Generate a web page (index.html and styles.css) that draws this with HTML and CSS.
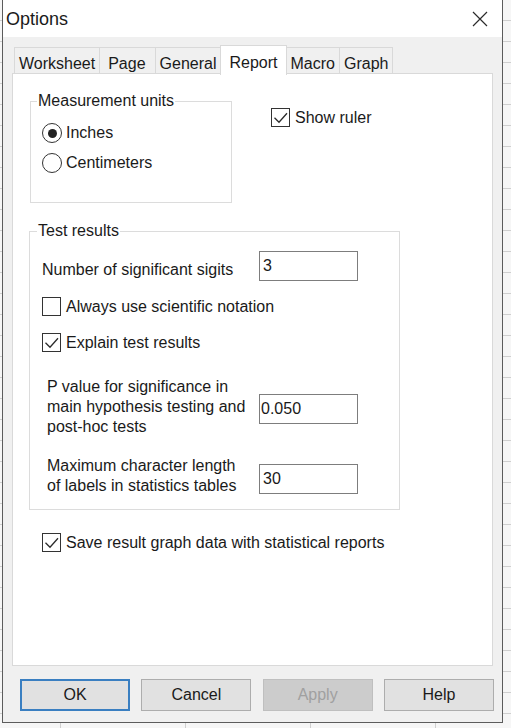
FILE: index.html
```html
<!DOCTYPE html>
<html lang="en">
<head>
<meta charset="utf-8">
<title>Options</title>
<link rel="stylesheet" href="styles.css">
</head>
<body>
<div class="dialog">
  <div class="titlebar">
    <span class="title">Options</span>
    <svg class="close" width="16" height="16" viewBox="0 0 16 16" aria-label="Close"><path d="M1 1 L15 15 M15 1 L1 15" stroke="#2b2b2b" stroke-width="1.2" fill="none"/></svg>
  </div>
  <div class="tabs">
    <div class="tab">Worksheet</div>
    <div class="tab tab-wide">Page</div>
    <div class="tab">General</div>
    <div class="tab active">Report</div>
    <div class="tab">Macro</div>
    <div class="tab last">Graph</div>
  </div>
  <div class="panel">
    <div class="top-row">
      <fieldset class="group units">
        <legend>Measurement units</legend>
        <div class="radio-row"><span class="radio checked"></span>Inches</div>
        <div class="radio-row"><span class="radio"></span>Centimeters</div>
      </fieldset>
      <div class="check-row ruler">
        <span class="checkbox"><svg width="19" height="19" viewBox="0 0 19 19"><path d="M3.5 9.8 L8 14.3 L16 5.2" stroke="#2b2b2b" stroke-width="1.3" fill="none"/></svg></span>Show ruler
      </div>
    </div>

    <fieldset class="group results">
      <legend>Test results</legend>
      <div class="field-row digits">
        <span class="field-label">Number of significant sigits</span>
        <input class="field-input" type="text" value="3" readonly>
      </div>
      <div class="check-row always">
        <span class="checkbox"></span>Always use scientific notation
      </div>
      <div class="check-row explain">
        <span class="checkbox"><svg width="19" height="19" viewBox="0 0 19 19"><path d="M3.5 9.8 L8 14.3 L16 5.2" stroke="#2b2b2b" stroke-width="1.3" fill="none"/></svg></span>Explain test results
      </div>
      <div class="field-row multi pvalue">
        <span class="field-label">P value for significance in<br>main hypothesis testing and<br>post-hoc tests</span>
        <input class="field-input" type="text" value="0.050" readonly>
      </div>
      <div class="field-row multi maxlen">
        <span class="field-label">Maximum character length<br>of labels in statistics tables</span>
        <input class="field-input" type="text" value="30" readonly>
      </div>
    </fieldset>

    <div class="check-row save">
      <span class="checkbox"><svg width="19" height="19" viewBox="0 0 19 19"><path d="M3.5 9.8 L8 14.3 L16 5.2" stroke="#2b2b2b" stroke-width="1.3" fill="none"/></svg></span>Save result graph data with statistical reports
    </div>
  </div>
  <div class="buttons">
    <button class="btn default">OK</button>
    <button class="btn">Cancel</button>
    <button class="btn disabled">Apply</button>
    <button class="btn">Help</button>
  </div>
</div>
</body>
</html>
```

FILE: styles.css
```css
* { box-sizing: border-box; }

html, body {
  margin: 0;
  padding: 0;
}

body {
  width: 511px;
  height: 728px;
  overflow: hidden;
  font-family: "Liberation Sans", Arial, sans-serif;
  font-size: 16px;
  color: #1a1a1a;
  background-color: #f6f6f6;
  background-image:
    repeating-linear-gradient(to bottom, transparent 0 20px, #cfcfcf 20px 21px),
    repeating-linear-gradient(to right, transparent 0 60px, #cfcfcf 60px 61px, transparent 61px 125px);
}

.dialog {
  margin-left: 2px;
  width: 501px;
  height: 723px;
  background: #f0f0f0;
  border-left: 1px solid #5c5c5c;
  border-right: 1px solid #5c5c5c;
  border-bottom: 1px solid #5c5c5c;
  display: flex;
  flex-direction: column;
}

.titlebar {
  height: 37px;
  background: #fff;
  display: flex;
  align-items: center;
  justify-content: space-between;
  padding-left: 3px;
  padding-right: 14px;
}

.title {
  font-size: 18px;
  color: #1a1a1a;
  margin-top: 1px;
}

.close { display: block; margin-top: 1px; }

.tabs {
  margin-top: 8px;
  margin-left: 11px;
  height: 28px;
  display: flex;
  align-items: flex-start;
}

.tab {
  margin-top: 2px;
  height: 26px;
  padding: 5px 4px 0;
  line-height: 21px;
  border: 1px solid #d9d9d9;
  border-right: none;
  border-bottom: none;
  background: #f0f0f0;
  white-space: nowrap;
}

.tab.last { border-right: 1px solid #d9d9d9; }

.tab-wide { padding-left: 8px; padding-right: 9px; }

.tab.active {
  margin-top: 0;
  height: 30px;
  padding: 6px 8px 0;
  background: #fff;
  position: relative;
  z-index: 1;
  border-right: 1px solid #d9d9d9;
}

.tab.active + .tab { border-left: none; }

.panel {
  margin: 0 9px;
  height: 593px;
  background: #fff;
  border: 1px solid #d9d9d9;
  padding-top: 18px;
}

.top-row {
  display: flex;
  align-items: flex-start;
}

.group {
  margin: 0;
  border: 1px solid #dcdcdc;
  min-width: 0;
}

.group legend {
  padding: 0 1px;
  line-height: 18px;
}

.units {
  margin-left: 17px;
  width: 202px;
  padding: 8px 0 24px 6px;
}

.radio-row {
  height: 30px;
  display: flex;
  align-items: center;
  gap: 4px;
  margin-left: 5px;
}

.radio {
  width: 20px;
  height: 20px;
  border-radius: 50%;
  border: 1.5px solid #333;
  display: flex;
  align-items: center;
  justify-content: center;
  flex: none;
}

.radio.checked::after {
  content: "";
  width: 9px;
  height: 9px;
  border-radius: 50%;
  background: #222;
}

.check-row {
  display: flex;
  align-items: center;
  gap: 5px;
  height: 19px;
  white-space: nowrap;
}

.checkbox {
  width: 19px;
  height: 19px;
  border: 1px solid #333;
  flex: none;
  position: relative;
}

.checkbox svg {
  position: absolute;
  left: -1px;
  top: -1px;
}

.ruler {
  margin-left: 39px;
  margin-top: 16px;
}

.results {
  margin-top: 19px;
  margin-left: 16px;
  width: 371px;
  padding: 11px 0 13px 7px;
}

.field-row {
  display: flex;
  align-items: flex-start;
  margin-left: 5px;
}

.field-label {
  width: 217px;
  line-height: 18px;
  margin-top: 10px;
  flex: none;
}

.field-row.multi { margin-left: 10px; }

.field-row.multi .field-label {
  width: 212px;
  line-height: 20px;
  margin-top: 0;
}

.field-input {
  width: 99px;
  height: 30px;
  border: 1px solid #7d7d7d;
  padding: 0 3px;
  font: inherit;
  color: #1a1a1a;
  background: #fff;
  outline: none;
}

.always { margin-top: 16px; margin-left: 5px; }
.explain { margin-top: 17px; margin-left: 5px; }
.pvalue { margin-top: 25px; }
.pvalue .field-input { margin-top: 17px; padding-left: 1px; }
.maxlen { margin-top: 19px; }
.maxlen .field-input { margin-top: 8px; }

.save {
  margin-top: 23px;
  margin-left: 29px;
}

.buttons {
  margin-top: 13px;
  display: flex;
  justify-content: space-between;
  padding: 0 8px 0 17px;
}

.btn {
  width: 110px;
  height: 32px;
  border: 1px solid #adadad;
  background: #e1e1e1;
  font: inherit;
  color: #1a1a1a;
  padding: 0;
}

.btn.default {
  border: 2px solid #3a7fc1;
}

.btn.disabled {
  background: #cccccc;
  border-color: #bfbfbf;
  color: #a0a0a0;
}
```
